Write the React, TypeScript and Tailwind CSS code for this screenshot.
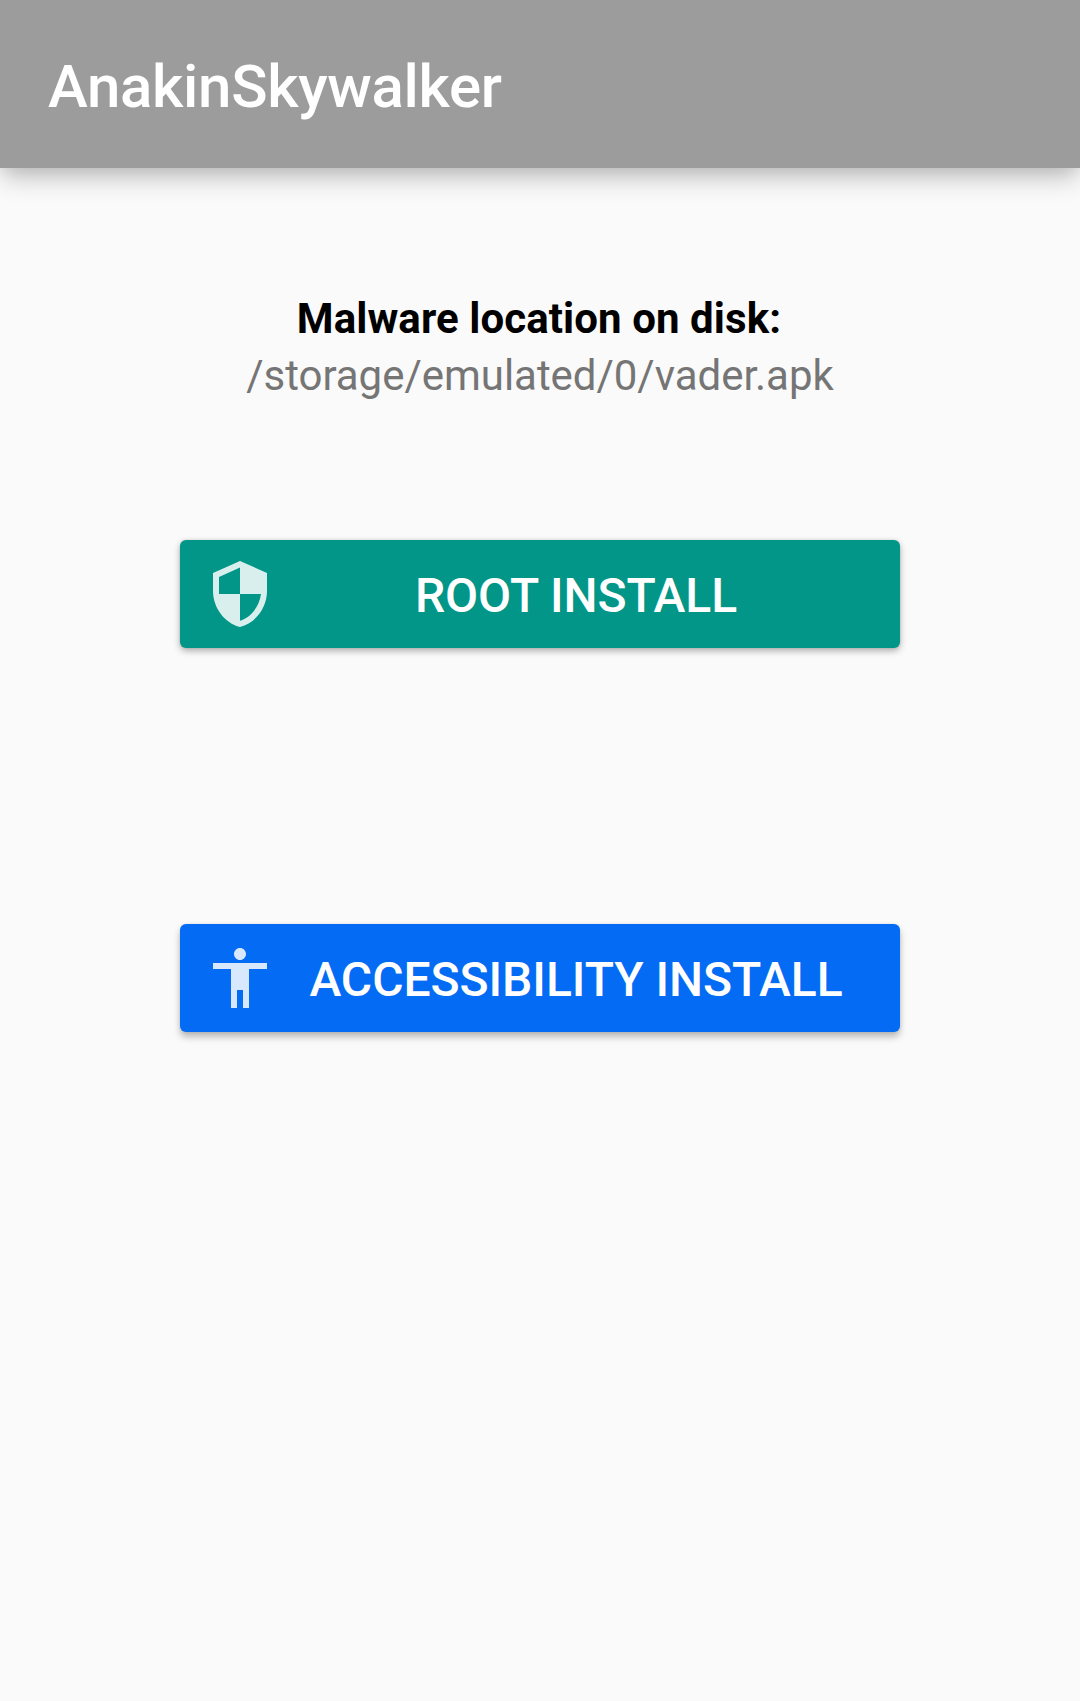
import React from "react";

const SHIELD =
  "M12 1L3 5v6c0 5.55 3.84 10.74 9 12 5.16-1.26 9-6.45 9-12V5l-9-4zm0 10.99h7c-.53 4.12-3.28 7.79-7 8.94V12H5V6.3l7-3.11v8.8z";
const PERSON =
  "M12 2c1.1 0 2 .9 2 2s-.9 2-2 2-2-.9-2-2 .9-2 2-2zm9 7h-6v13h-2v-6h-2v6H9V9H3V7h18v2z";

function InstallButton({ icon, label, className }: { icon: string; label: string; className: string }) {
  return (
    <button
      className={`flex h-[108px] w-[720px] items-center rounded-[6px] pl-6 pr-6 text-white ${className}`}
    >
      <svg viewBox="0 0 24 24" className="size-[72px] shrink-0 fill-white/85">
        <path d={icon} />
      </svg>
      <span className="flex-1 whitespace-nowrap pt-[3px] text-center text-[48px] font-medium leading-[56px] tracking-[-0.04px]">
        {label}
      </span>
    </button>
  );
}

export default function App() {
  return (
    <div className="flex h-[1701px] w-[1080px] flex-col bg-[#fafafa] font-['Roboto',sans-serif]">
      <header className="flex h-[168px] shrink-0 items-center bg-[#9c9c9c] px-12 pt-[5px] shadow-[0_12px_24px_-3px_rgba(0,0,0,0.24),0_4px_12px_rgba(0,0,0,0.06)]">
        <h1 className="text-[60px] font-medium leading-[70px] tracking-[-0.3px] text-white">AnakinSkywalker</h1>
      </header>
      <main className="flex flex-col items-center pt-[122px]">
        <div className="text-center text-[42px] leading-[57px]">
          <p className="pr-[2px] font-bold tracking-[0.08px] text-black">Malware location on disk:</p>
          <p className="tracking-[-0.03px] text-[#757575]">/storage/emulated/0/vader.apk</p>
        </div>
        <div className="mt-[136px] flex flex-col gap-[276px]">
          <InstallButton
            icon={SHIELD}
            label="ROOT INSTALL"
            className="bg-[#029688] shadow-[0_3px_7px_rgba(0,0,0,0.3),0_0_3px_rgba(0,0,0,0.1)]"
          />
          <InstallButton
            icon={PERSON}
            label="ACCESSIBILITY INSTALL"
            className="bg-[#046cf4] shadow-[0_5px_7px_rgba(0,0,0,0.26),0_0_3px_rgba(0,0,0,0.1)]"
          />
        </div>
      </main>
    </div>
  );
}
